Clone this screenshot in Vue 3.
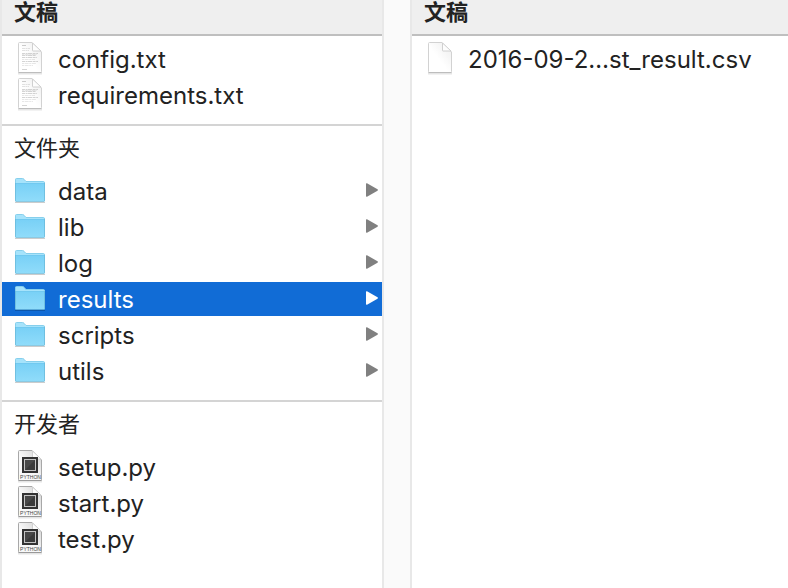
<script setup>
import { ref } from 'vue'

const groups = [
  { title: '文稿', kind: 'text', items: ['config.txt', 'requirements.txt'] },
  { title: '文件夹', kind: 'folder', items: ['data', 'lib', 'log', 'results', 'scripts', 'utils'] },
  { title: '开发者', kind: 'python', items: ['setup.py', 'start.py', 'test.py'] },
]

const columns = [
  groups,
  [{ title: '文稿', kind: 'blank', items: ['2016-09-2…st_result.csv'] }],
]

const selected = ref('results')
</script>

<template>
  <main class="browser">
    <div v-for="(column, c) in columns" :key="c" class="column">
      <section v-for="(group, g) in column" :key="g" class="group">
        <h2 :class="g === 0 ? 'heading' : 'title'">{{ group.title }}</h2>
        <ul class="list">
          <li v-for="name in group.items" :key="name">
            <button
              type="button"
              class="row"
              :class="{ selected: selected === name }"
              @click="selected = name"
            >
              <svg v-if="group.kind === 'folder'" class="icon" viewBox="0 0 32 34" aria-hidden="true">
                <defs>
                  <linearGradient :id="'folder-' + name" x1="0" y1="0" x2="0" y2="1">
                    <stop offset="0" stop-color="#78d0f6" />
                    <stop offset="1" stop-color="#90dcfa" />
                  </linearGradient>
                </defs>
                <path d="M1 28.500h30" stroke="#000" stroke-opacity=".2" stroke-width="1" />
                <path d="M1 27V6q0-1.500 1.500-1.500H8.500q1 0 1.600.8L12 7.500h17.500Q31 7.500 31 9v18z" fill="#a6e3fb" />
                <path d="M1.500 27V5.500q0-1 1-1H8.500q1 0 1.500.8L12 7.500h17.500q1 0 1 1.500" fill="none" stroke="#86cfec" />
                <path d="M1 9h30v17.500q0 1-1 1H2q-1 0-1-1z" :fill="'url(#folder-' + name + ')'" />
                <path d="M2 9.500h28" stroke="#6cc5ec" stroke-opacity=".6" />
                <path d="M1.500 9v17.500q0 1 .5 1h28q.5 0 .5-1V9" fill="none" stroke="#62b0d0" stroke-opacity=".6" />
              </svg>
              <svg v-else class="icon" viewBox="0 0 32 34" aria-hidden="true">
                <defs>
                  <linearGradient :id="'page-' + name" x1="0" y1="1" x2="1" y2="0">
                    <stop offset="0.45" :stop-color="group.kind === 'python' ? '#f8f8f8' : '#fff'" />
                    <stop offset="1" :stop-color="group.kind === 'python' ? '#cfcfcf' : '#ececec'" />
                  </linearGradient>
                </defs>
                <path d="M4 31.500h24" stroke="#000" stroke-opacity=".1" stroke-width="2" />
                <path
                  d="M5.500.5h12.500l9.500 9.500v19.500q0 1-1 1h-21q-1 0-1-1v-28q0-1 1-1z"
                  :fill="'url(#page-' + name + ')'"
                  :stroke="group.kind === 'python' ? '#a8a8a8' : '#d2d2d2'"
                />
                <path d="M4.500 30.500h23" :stroke="group.kind === 'python' ? '#999' : '#bdbdbd'" />
                <path d="M18.500 1v7.500q0 .5.500.5h8z" fill="#fdfdfd" stroke="#d0d0d0" />
                <g v-if="group.kind === 'text'" fill="none" stroke="#999" stroke-width="1">
                  <path d="M8 3.500h4" stroke-opacity=".5" />
                  <path d="M8 6.500h8M8 8.500h7" stroke-dasharray="3 .5 2 .5" stroke-opacity=".28" />
                  <path d="M8 11.500h16M8 13.500h14M8 15.500h15M8 19.500h16" stroke-dasharray="3 .6 2 .4 4 .6" stroke-opacity=".42" />
                  <path d="M8 12.500h15M8 17.500h13M8 21.500h14M8 23.500h11" stroke-dasharray="2 .6 4 .6" stroke-opacity=".24" />
                  <path d="M8 27.500h5" stroke-opacity=".42" />
                </g>
                <g v-if="group.kind === 'python'">
                  <rect x="8" y="7" width="16" height="16" fill="#333" />
                  <rect x="10.500" y="9.500" width="11" height="11" fill="#484848" stroke="#c4c4c4" />
                  <path d="M11 20h10V10z" fill="#3a3a3a" />
                  <text x="16.500" y="28.500" text-anchor="middle" class="label">PYTHON</text>
                </g>
              </svg>
              <span class="name">{{ name }}</span>
              <svg v-if="group.kind === 'folder'" class="arrow" viewBox="0 0 12 14" aria-hidden="true">
                <path d="M0 1Q0 0 1 .3L11.500 6.300Q12.300 7 11.500 7.700L1 13.700Q0 14 0 13z" fill="currentColor" />
              </svg>
            </button>
          </li>
        </ul>
      </section>
    </div>
  </main>
</template>

<style>
body {
  margin: 0;
  background: #fff;
}
</style>

<style scoped>
.browser {
  display: grid;
  grid-template-columns: 384fr 404fr;
  min-height: 100vh;
  background: #fafafa;
  color: #222;
  font-family: Inter, "Noto Sans CJK SC", sans-serif;
}

.column {
  border-left: 2px solid #e8e8e8;
  border-right: 2px solid #e8e8e8;
  background: #fff;
}

.column + .column {
  border-right: 0;
  margin-left: 26px;
}

.heading,
.title {
  margin: 0;
  padding: 0 12px;
  font-size: 22px;
}

.heading {
  height: 34px;
  line-height: 24px;
  font-weight: 700;
  background: #efefef;
  border-bottom: 2px solid #bfbfbf;
}

.title {
  padding-bottom: 4px;
  line-height: 44px;
  font-weight: 400;
  border-top: 2px solid #d4d4d4;
}

.list {
  display: flex;
  flex-direction: column;
  gap: 2px;
  margin: 0;
  padding: 0 0 12px;
  list-style: none;
}

.heading + .list {
  padding-top: 6px;
}

.row {
  display: flex;
  align-items: center;
  width: 100%;
  height: 34px;
  margin: 0;
  padding: 0 4px 0 12px;
  border: 0;
  background: none;
  color: inherit;
  font: inherit;
  font-size: 24px;
  line-height: 32px;
  text-align: left;
}

.row.selected {
  background: #116cd6;
  color: #fff;
}

.icon {
  flex: none;
  width: 32px;
  height: 34px;
  margin-right: 12px;
}

.name {
  flex: 1;
  padding-top: 2px;
  white-space: nowrap;
}

.arrow {
  flex: none;
  width: 12px;
  height: 14px;
  padding-bottom: 2px;
  color: #808080;
}

.selected .arrow {
  color: #fff;
}

.label {
  fill: #444;
  font-family: "Liberation Sans", sans-serif;
  font-size: 5px;
}
</style>
